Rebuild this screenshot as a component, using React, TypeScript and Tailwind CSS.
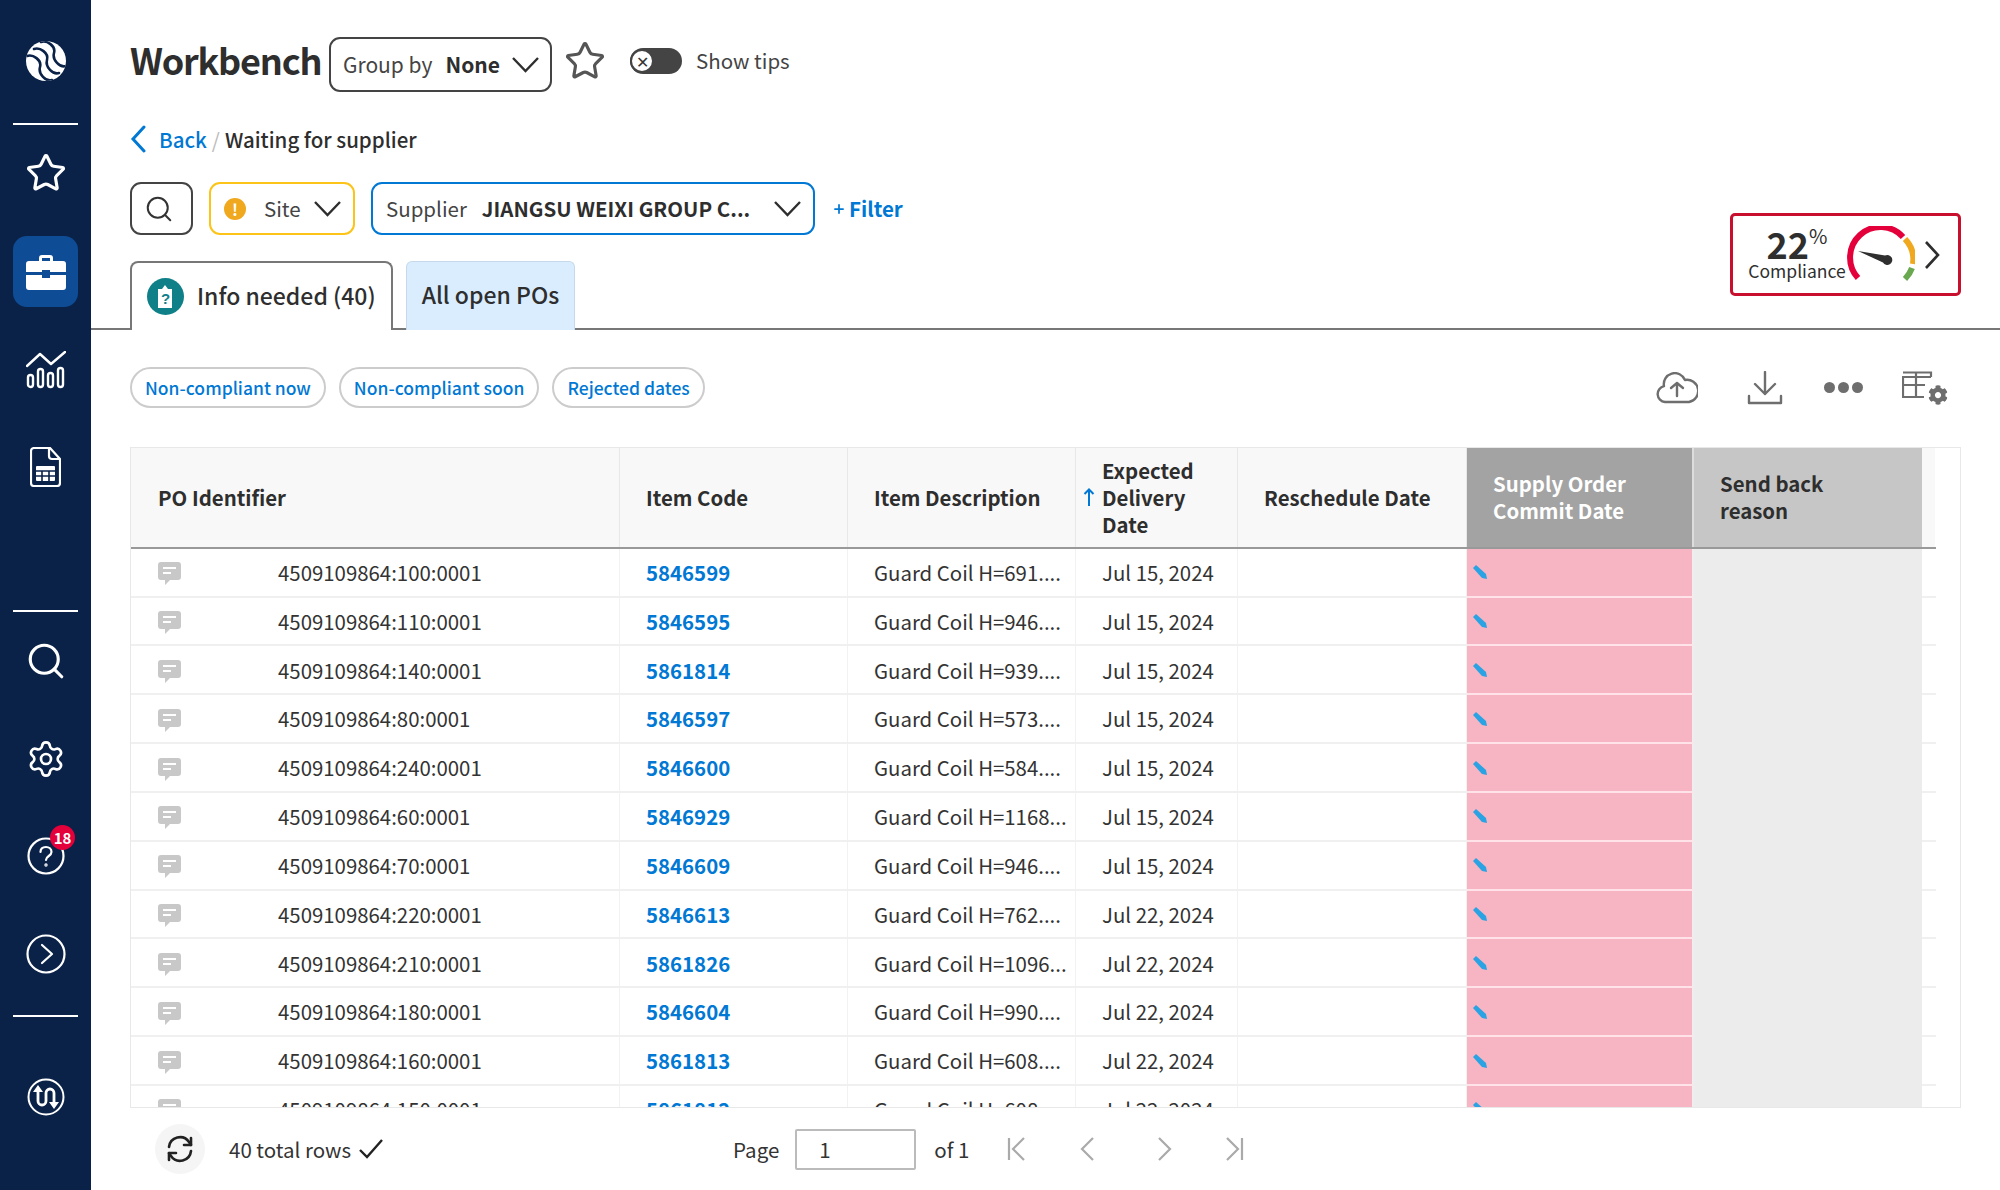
import { Search, Star, Settings, Plus } from "lucide-react";
import { FaCog } from "react-icons/fa";

const rows = [
  ["4509109864:100:0001", "5846599", "Guard Coil H=691....", "Jul 15, 2024"],
  ["4509109864:110:0001", "5846595", "Guard Coil H=946....", "Jul 15, 2024"],
  ["4509109864:140:0001", "5861814", "Guard Coil H=939....", "Jul 15, 2024"],
  ["4509109864:80:0001", "5846597", "Guard Coil H=573....", "Jul 15, 2024"],
  ["4509109864:240:0001", "5846600", "Guard Coil H=584....", "Jul 15, 2024"],
  ["4509109864:60:0001", "5846929", "Guard Coil H=1168...", "Jul 15, 2024"],
  ["4509109864:70:0001", "5846609", "Guard Coil H=946....", "Jul 15, 2024"],
  ["4509109864:220:0001", "5846613", "Guard Coil H=762....", "Jul 22, 2024"],
  ["4509109864:210:0001", "5861826", "Guard Coil H=1096...", "Jul 22, 2024"],
  ["4509109864:180:0001", "5846604", "Guard Coil H=990....", "Jul 22, 2024"],
  ["4509109864:160:0001", "5861813", "Guard Coil H=608....", "Jul 22, 2024"],
  ["4509109864:150:0001", "5861812", "Guard Coil H=608....", "Jul 22, 2024"],
];

const gridCols = "grid-cols-[489px_228px_228px_162px_229px_227px_228px_13px]";

function Logo() {
  const strand = "M9 9C15 7 24 13 22 20C20 27 28 35 34 33";
  return (
    <svg width="42" height="42" viewBox="0 0 42 42">
      <defs>
        <clipPath id="logo-clip"><circle cx="21" cy="21" r="20" /></clipPath>
      </defs>
      <circle cx="21" cy="21" r="20" fill="#fff" />
      <g fill="none" stroke="#0a2248" strokeWidth="2.6" strokeLinecap="round" clipPath="url(#logo-clip)">
        <path d={strand} transform="translate(-7 7)" />
        <path d={strand} />
        <path d={strand} transform="translate(7 -7)" />
      </g>
    </svg>
  );
}

function Briefcase() {
  return (
    <svg width="40" height="36" viewBox="0 0 40 36" fill="#fff">
      <path d="M13 7V4a3 3 0 0 1 3-3h8a3 3 0 0 1 3 3v3h-3V4h-8v3z" />
      <path d="M3 7h34a3 3 0 0 1 3 3v8H24v-2h-8v2H0v-8a3 3 0 0 1 3-3z" />
      <path d="M0 21h16v3h8v-3h16v12a3 3 0 0 1-3 3H3a3 3 0 0 1-3-3z" />
    </svg>
  );
}

function ChartIcon() {
  return (
    <svg width="40" height="38" viewBox="0 0 40 38" fill="none" stroke="#fff" strokeWidth="2.4" strokeLinecap="round" strokeLinejoin="round">
      <path d="M1 15 14 3l11 10L39 1" />
      <rect x="2" y="24" width="5" height="12" rx="2.5" />
      <rect x="12" y="18" width="5" height="18" rx="2.5" />
      <rect x="22" y="22" width="5" height="14" rx="2.5" />
      <rect x="32" y="17" width="5" height="19" rx="2.5" />
    </svg>
  );
}

function DocIcon() {
  return (
    <svg width="31" height="40" viewBox="0 0 31 40" fill="none" stroke="#fff" strokeWidth="2.2" strokeLinejoin="round">
      <path d="M4 1h16l10 11v24a3 3 0 0 1-3 3H4a3 3 0 0 1-3-3V4a3 3 0 0 1 3-3z" />
      <path d="M19 1v8a3 3 0 0 0 3 3h8" />
      <rect x="6" y="19" width="19" height="15" fill="#fff" stroke="none" rx="1" />
      <path d="M6 24h19M6 29h19M12 24v10M19 24v10" stroke="#0a2248" strokeWidth="1.6" />
    </svg>
  );
}

function HelpIcon() {
  return (
    <svg width="38" height="38" viewBox="0 0 38 38" fill="none" stroke="#fff" strokeWidth="2.2" strokeLinecap="round">
      <circle cx="19" cy="19" r="17.5" />
      <path d="M13.5 15c0-3.500 2.500-5 5.500-5s5.500 2 5.500 5c0 4-5.500 4-5.500 8" />
      <circle cx="19" cy="28" r="0.6" />
    </svg>
  );
}

function NextIcon() {
  return (
    <svg width="40" height="40" viewBox="0 0 40 40" fill="none" stroke="#fff" strokeWidth="2.2" strokeLinecap="round" strokeLinejoin="round">
      <circle cx="20" cy="20" r="18.5" />
      <path d="m16 11 10 9-10 9" />
    </svg>
  );
}

function FlowIcon() {
  return (
    <svg width="38" height="38" viewBox="0 0 38 38" fill="none" stroke="#fff" strokeWidth="2">
      <circle cx="19" cy="19" r="17.5" />
      <path d="M11 13v10a4 4 0 0 0 8 0v-8a4 4 0 0 1 8 0v10" strokeWidth="2.8" />
      <path d="m11 7-5 7h10zM27 31l-5-7h10z" fill="#fff" stroke="none" />
    </svg>
  );
}

function Bubble() {
  return (
    <svg width="23" height="24" viewBox="0 0 23 24">
      <path d="M3 0h17a3 3 0 0 1 3 3v12a3 3 0 0 1-3 3h-8l-5 5v-5H3a3 3 0 0 1-3-3V3a3 3 0 0 1 3-3z" fill="#c8c8c8" />
      <path d="M5 6h13M5 11h8" stroke="#fff" strokeWidth="2" />
    </svg>
  );
}

function Pencil() {
  return (
    <svg width="14" height="14" viewBox="0 0 14 14">
      <path d="M0 3 3 0l10 9 1 5-5-1z" fill="#29a3e3" />
    </svg>
  );
}

function ChevDown({ className = "" }: { className?: string }) {
  return (
    <svg width="27" height="16" viewBox="0 0 27 16" fill="none" stroke="#2e2e2e" strokeWidth="2.4" className={className}>
      <path d="m1 1 12.500 13L26 1" />
    </svg>
  );
}

function Gauge() {
  return (
    <svg width="68" height="58" viewBox="0 0 68 58" fill="none">
      <path d="M11 52A30 30 0 0 1 56 11" stroke="#e4003a" strokeWidth="6" />
      <path d="M58 13a30 30 0 0 1 8 25" stroke="#f0a81e" strokeWidth="6" />
      <path d="M65 42a30 30 0 0 1-7 11" stroke="#6aa84f" strokeWidth="6" />
      <path d="M11 25l27 4.500a5 5 0 1 1-2 7z" fill="#2f2f2f" />
    </svg>
  );
}

function CloudUp() {
  return (
    <svg width="42" height="32" viewBox="0 0 42 32" fill="none" stroke="#6e6e6e" strokeWidth="2.4" strokeLinecap="round" strokeLinejoin="round">
      <path d="M10 30H9a8 8 0 0 1-1-15.800A11 11 0 0 1 29 8a9 9 0 0 1 4 22z" />
      <path d="M21 24V11m-6 5 6-5 6 5" />
    </svg>
  );
}

function DownloadIcon() {
  return (
    <svg width="36" height="34" viewBox="0 0 36 34" fill="none" stroke="#6e6e6e" strokeWidth="2.4" strokeLinecap="round" strokeLinejoin="round">
      <path d="M18 1v22M8 13l10 10 10-10" />
      <path d="M2 25v7h32v-7" />
    </svg>
  );
}

function TableGear() {
  return (
    <div className="relative h-[34px] w-[46px]">
      <svg width="34" height="28" viewBox="0 0 34 28" fill="none" stroke="#6e6e6e" strokeWidth="2.2">
        <path d="M29 6H1V26H22M1 1.500h28V6M1 14h22M14 1.500V26" />
      </svg>
      <FaCog size={20} color="#6e6e6e" className="absolute bottom-0 right-0 rounded-full bg-white" />
    </div>
  );
}

function SidebarItem({ children, className = "" }: { children: React.ReactNode; className?: string }) {
  return <div className={`flex items-center justify-center ${className}`}>{children}</div>;
}

function Sidebar() {
  return (
    <aside className="flex h-full w-[91px] shrink-0 flex-col items-center bg-[#0a2248]">
      <SidebarItem className="h-[123px] -translate-y-[1px]"><Logo /></SidebarItem>
      <div className="h-0.5 w-[65px] bg-white" />
      <SidebarItem className="h-[96px]"><Star size={42} color="#fff" strokeWidth={1.8} /></SidebarItem>
      <SidebarItem className="mt-[15px] h-[71px] w-[65px] rounded-[14px] bg-[#0f4c96]"><Briefcase /></SidebarItem>
      <SidebarItem className="mt-[28px] h-[70px]"><ChartIcon /></SidebarItem>
      <SidebarItem className="mt-[30px] h-[64px]"><DocIcon /></SidebarItem>
      <div className="mt-[111px] h-0.5 w-[65px] bg-white" />
      <SidebarItem className="mt-[17px] h-[64px]"><Search size={42} color="#fff" strokeWidth={1.8} /></SidebarItem>
      <SidebarItem className="mt-[34px] h-[64px]"><Settings size={40} color="#fff" strokeWidth={1.6} /></SidebarItem>
      <SidebarItem className="relative mt-[33px] h-[64px] w-full">
        <HelpIcon />
        <span className="absolute left-[50px] top-[1px] flex h-[25px] w-[25px] items-center justify-center rounded-full bg-[#e4003a] text-[15px] font-semibold leading-none text-white">18</span>
      </SidebarItem>
      <SidebarItem className="mt-[34px] h-[64px]"><NextIcon /></SidebarItem>
      <div className="mt-[29px] h-0.5 w-[65px] bg-white" />
      <SidebarItem className="mt-[48px] h-[64px]"><FlowIcon /></SidebarItem>
    </aside>
  );
}

function Header() {
  return (
    <div className="flex justify-between border-b-2 border-[#777]">
      <div className="pl-[39px]">
        <div className="mt-[37px] flex h-[55px] items-center">
          <h1 className="mb-[12px] w-[191px] whitespace-nowrap text-[36px] font-semibold leading-none tracking-[-1.2px] text-[#2e2e2e]">Workbench</h1>
          <button className="ml-2 flex h-[55px] w-[223px] items-center rounded-[11px] border-2 border-[#444] pl-[12px] text-[21px] text-[#444]">
            <span>Group by</span>
            <span className="ml-[13px] font-semibold text-[#2e2e2e]">None</span>
            <ChevDown className="ml-[12px]" />
          </button>
          <Star size={42} strokeWidth={1.8} className="mb-[8px] ml-[12px] text-[#555]" />
          <div className="mb-[8px] ml-[24px] flex h-[26px] w-[52px] items-center rounded-full bg-[#444]">
            <span className="flex h-[24px] w-[24px] items-center justify-center rounded-full border-2 border-[#444] bg-white text-[16px] leading-none text-[#333]">✕</span>
          </div>
          <span className="mb-[8px] ml-[14px] text-[20.500px] text-[#444]">Show tips</span>
        </div>
        <div className="mt-[32px] flex h-[30px] items-center text-[20.500px]">
          <svg width="16" height="28" viewBox="0 0 16 28" fill="none" stroke="#0078d4" strokeWidth="3" strokeLinecap="round">
            <path d="M14 2 3 14l11 12" />
          </svg>
          <a className="ml-[13px] font-medium text-[#0078d4]">Back</a>
          <span className="mx-[5px] text-[#bbb]">/</span>
          <span className="font-medium text-[#2e2e2e]">Waiting for supplier</span>
        </div>
        <div className="mt-[28px] flex h-[53px] items-center">
          <button className="flex h-[53px] w-[63px] items-center justify-center rounded-[11px] border-2 border-[#444] pr-[6px]">
            <Search size={30} strokeWidth={1.6} className="text-[#333]" />
          </button>
          <button className="ml-4 flex h-[53px] w-[146px] items-center rounded-[11px] border-2 border-[#fcc419] pl-[13px] text-[20.500px] text-[#444]">
            <span className="flex h-[22px] w-[22px] items-center justify-center rounded-full bg-[#f0a81e] text-[16px] font-bold leading-none text-white">!</span>
            <span className="ml-[18px]">Site</span>
            <ChevDown className="ml-[13px]" />
          </button>
          <button className="ml-4 flex h-[53px] w-[444px] items-center rounded-[11px] border-2 border-[#0078d4] pl-[13px] text-[20.500px] text-[#444]">
            <span>Supplier</span>
            <span className="ml-[15px] whitespace-nowrap text-left font-semibold text-[#2e2e2e]">JIANGSU WEIXI GROUP C...</span>
            <ChevDown className="ml-[24px]" />
          </button>
          <a className="ml-[17px] flex items-center text-[20.500px] font-semibold text-[#0078d4]">
            <Plus size={14} strokeWidth={3} className="mr-[3px]" />Filter
          </a>
        </div>
        <div className="-mb-0.5 mt-[26px] flex h-[69px] items-end">
          <div className="flex h-[69px] w-[263px] items-center rounded-t-[8px] border-2 border-b-0 border-[#777] bg-white pl-[15px] text-[23px] text-[#2e2e2e]">
            <svg width="37" height="37" viewBox="0 0 37 37">
              <circle cx="18.500" cy="18.500" r="18.500" fill="#0f8088" />
              <path d="M11 11h4l3-4 3 4h4v19H11z" fill="#fff" />
              <text x="18.500" y="26" textAnchor="middle" fontSize="15" fontWeight="700" fill="#0f8088" fontFamily="Liberation Sans, sans-serif">?</text>
            </svg>
            <span className="mb-[3px] ml-[13px] whitespace-nowrap font-medium">Info needed (40)</span>
          </div>
          <div className="ml-[13px] flex h-[69px] w-[169px] items-center justify-center rounded-t-[6px] border border-b-0 border-[#c5d9ea] bg-[#d9edff] pb-[3px] text-[23px] font-medium text-[#2e2e2e]">
            All open POs
          </div>
        </div>
      </div>
      <div className="pr-[39px] pt-[213px]">
        <div className="flex h-[83px] w-[231px] items-center rounded-[5px] border-[3px] border-[#c8102e] pl-[14px]">
          <div className="flex w-[100px] flex-col items-center text-[#2e2e2e]">
            <div className="flex items-start leading-none">
              <span className="text-[36px] font-semibold leading-[32px]">22</span>
              <span className="text-[20px] leading-[18px]">%</span>
            </div>
            <span className="whitespace-nowrap text-[17.500px] leading-[24px]">Compliance</span>
          </div>
          <Gauge />
          <svg width="17" height="30" viewBox="0 0 17 30" fill="none" stroke="#2e2e2e" strokeWidth="2.6" className="ml-[9px]">
            <path d="m2 2 12 13L2 28" />
          </svg>
        </div>
      </div>
    </div>
  );
}

function Chips() {
  return (
    <div className="flex h-[117px] items-center justify-between pl-[39px] pr-[52px] pb-[1px]">
      <div className="flex gap-[13px]">
        {["Non-compliant now", "Non-compliant soon", "Rejected dates"].map((c) => (
          <span key={c} className="flex h-[41px] items-center rounded-full border-2 border-[#ccc] px-[13px] text-[17.500px] font-medium text-[#0078d4]">{c}</span>
        ))}
      </div>
      <div className="flex items-center">
        <CloudUp />
        <span className="ml-[49px]"><DownloadIcon /></span>
        <span className="ml-[41px] flex gap-[3px]">
          <i className="h-[11px] w-[11px] rounded-full bg-[#6e6e6e]" />
          <i className="h-[11px] w-[11px] rounded-full bg-[#6e6e6e]" />
          <i className="h-[11px] w-[11px] rounded-full bg-[#6e6e6e]" />
        </span>
        <span className="ml-[39px]"><TableGear /></span>
      </div>
    </div>
  );
}

function DataTable() {
  const headCell = "flex items-center border-r border-[#e8e8e8] bg-[#f8f8f8] pl-[26px] text-[20.400px] font-semibold leading-[27px] text-[#2e2e2e]";
  const cell = "flex min-w-0 items-center border-r border-[#f2f2f2] text-[20.400px]";
  return (
    <div className="mx-[39px] h-[663px] overflow-hidden border border-[#e8e8e8]">
      <div className={`grid h-[101px] w-[1805px] border-b-2 border-[#999] ${gridCols}`}>
        <div className={`${headCell} pl-[27px]`}>PO Identifier</div>
        <div className={headCell}>Item Code</div>
        <div className={headCell}>Item Description</div>
        <div className={`${headCell} relative`}>
          <svg width="12" height="18" viewBox="0 0 12 18" className="absolute left-[7px]" fill="none" stroke="#0078d4" strokeWidth="2">
            <path d="M6 18V2M1.500 6 6 1.500 10.500 6" />
          </svg>
          <span>Expected<br />Delivery<br />Date</span>
        </div>
        <div className={headCell}>Reschedule Date</div>
        <div className="flex items-center border-r-2 border-[#ddd] bg-[#a3a3a3] pl-[26px] text-[20.400px] font-semibold leading-[27px] text-white">Supply Order<br />Commit Date</div>
        <div className="flex items-center bg-[#c6c6c6] pl-[26px] text-[20.400px] font-semibold leading-[27px] text-[#2e2e2e]">Send back<br />reason</div>
        <div className="bg-[#f8f8f8]" />
      </div>
      {rows.map((r) => (
        <div key={r[0]} className={`grid h-[48.850px] w-[1805px] border-b-2 border-[#f0f0f0] ${gridCols}`}>
          <div className={`${cell} pl-[27px] text-[#333]`}>
            <span className="mt-[4px]"><Bubble /></span>
            <span className="ml-[97px]">{r[0]}</span>
          </div>
          <div className={`${cell} pl-[26px] font-semibold text-[#0078d4]`}>{r[1]}</div>
          <div className={`${cell} overflow-hidden whitespace-nowrap pl-[26px] text-[#333]`}>{r[2]}</div>
          <div className={`${cell} pl-[26px] text-[#333]`}>{r[3]}</div>
          <div className={cell} />
          <div className="-mb-0.5 flex items-center border-r-2 border-r-[#eee] border-b-2 border-b-[#ffe3e9] bg-[#f7b5c3] pl-[6px]"><Pencil /></div>
          <div className="-mb-0.5 bg-[#ececec]" />
          <div />
        </div>
      ))}
    </div>
  );
}

function Footer() {
  return (
    <div className="flex h-[82px] items-center pl-[64px] text-[20.500px] text-[#333]">
      <span className="flex h-[50px] w-[50px] items-center justify-center rounded-full bg-[#f5f5f5]">
        <svg width="28" height="28" viewBox="0 0 28 28" fill="none" stroke="#222" strokeWidth="2.6" strokeLinecap="round" strokeLinejoin="round">
          <path d="M3 12a11 11 0 0 1 20-5l2 3M25 16a11 11 0 0 1-20 5l-2-3" />
          <path d="M25 3v7h-7M3 25v-7h7" />
        </svg>
      </span>
      <span className="ml-[24px]">40 total rows</span>
      <svg width="24" height="20" viewBox="0 0 24 20" fill="none" stroke="#222" strokeWidth="2.400" className="ml-[8px]">
        <path d="M1 11l7 7L23 1" />
      </svg>
      <span className="ml-[350px]">Page</span>
      <span className="ml-[16px] flex h-[41px] w-[121px] items-center rounded-[2px] border-2 border-[#bbb] pl-[22px]">1</span>
      <span className="ml-[18px]">of 1</span>
      <div className="ml-[38px] flex items-center">
        <svg width="20" height="24" viewBox="0 0 20 24" fill="none" stroke="#aaa" strokeWidth="2.200"><path d="M2 1v22M17 1 6 12l11 11" /></svg>
        <svg width="16" height="24" viewBox="0 0 16 24" fill="none" stroke="#aaa" strokeWidth="2.200" className="ml-[52px]"><path d="M14 1 3 12l11 11" /></svg>
        <svg width="16" height="24" viewBox="0 0 16 24" fill="none" stroke="#aaa" strokeWidth="2.200" className="ml-[62px]"><path d="m2 1 11 11L2 23" /></svg>
        <svg width="20" height="24" viewBox="0 0 20 24" fill="none" stroke="#aaa" strokeWidth="2.200" className="ml-[51px]"><path d="M18 1v22M3 1l11 11L3 23" /></svg>
      </div>
    </div>
  );
}

export default function App() {
  return (
    <div className="flex h-[1190px] w-[2000px] overflow-hidden bg-white font-['Noto_Sans_CJK_SC','Noto_Sans',sans-serif]">
      <Sidebar />
      <main className="flex min-w-0 flex-1 flex-col">
        <Header />
        <Chips />
        <DataTable />
        <Footer />
      </main>
    </div>
  );
}
